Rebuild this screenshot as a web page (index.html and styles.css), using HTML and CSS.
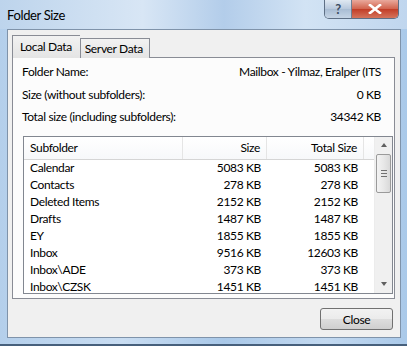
FILE: index.html
```html
<!DOCTYPE html>
<html lang="en">
<head>
    <meta charset="UTF-8">
    <title>Folder Size</title>
    <link rel="stylesheet" href="styles.css">
</head>
<body>

<div class="window">
    <div class="titlebar">
        <span class="title">Folder Size</span>
        <div class="caption-buttons">
            <div class="cap-btn help">?</div>
            <div class="cap-btn close">
                <svg width="14" height="10" viewBox="0 0 14 10">
                    <path d="M2 1 L12 9 M12 1 L2 9" stroke="#ffffff" stroke-width="2.6" stroke-linecap="square"/>
                </svg>
            </div>
        </div>
    </div>

    <div class="client">
        <div class="tabs">
            <div class="tab active">Local Data</div>
            <div class="tab">Server Data</div>
        </div>

        <div class="panel">
            <div class="info-row">
                <span>Folder Name:</span>
                <span>Mailbox - Yilmaz, Eralper (ITS</span>
            </div>
            <div class="info-row">
                <span>Size (without subfolders):</span>
                <span>0 KB</span>
            </div>
            <div class="info-row">
                <span>Total size (including subfolders):</span>
                <span>34342 KB</span>
            </div>

            <div class="list">
                <div class="list-body">
                    <div class="row header">
                        <div class="cell">Subfolder</div>
                        <div class="cell num">Size</div>
                        <div class="cell num">Total Size</div>
                    </div>
                    <div class="row"><div class="cell">Calendar</div><div class="cell num">5083 KB</div><div class="cell num">5083 KB</div></div>
                    <div class="row"><div class="cell">Contacts</div><div class="cell num">278 KB</div><div class="cell num">278 KB</div></div>
                    <div class="row"><div class="cell">Deleted Items</div><div class="cell num">2152 KB</div><div class="cell num">2152 KB</div></div>
                    <div class="row"><div class="cell">Drafts</div><div class="cell num">1487 KB</div><div class="cell num">1487 KB</div></div>
                    <div class="row"><div class="cell">EY</div><div class="cell num">1855 KB</div><div class="cell num">1855 KB</div></div>
                    <div class="row"><div class="cell">Inbox</div><div class="cell num">9516 KB</div><div class="cell num">12603 KB</div></div>
                    <div class="row"><div class="cell">Inbox\ADE</div><div class="cell num">373 KB</div><div class="cell num">373 KB</div></div>
                    <div class="row"><div class="cell">Inbox\CZSK</div><div class="cell num">1451 KB</div><div class="cell num">1451 KB</div></div>
                </div>
                <div class="scrollbar">
                    <div class="arrow up"></div>
                    <div class="thumb"><span class="grip"></span></div>
                    <div class="track"></div>
                    <div class="arrow down"></div>
                </div>
            </div>
        </div>

        <div class="footer">
            <button class="btn">Close</button>
        </div>
    </div>
</div>

</body>
</html>
```

FILE: styles.css
```css
body {
    margin: 0;
    font-family: Lato, "Noto Sans", sans-serif;
    font-size: 12px;
    letter-spacing: -0.35px;
    color: #000000;
    background-color: #a9c8e8;
}

.window {
    width: 407px;
    height: 346px;
    box-sizing: border-box;
    display: flex;
    flex-direction: column;
    background: linear-gradient(to right, #b4cfeb, #c9ddf2 30%, #a9c8e8 55%, #c3d9f0 80%, #aac9e9);
    border-bottom: 2px solid #47607c;
}

.titlebar {
    height: 29px;
    display: flex;
    align-items: flex-start;
    justify-content: space-between;
    background: linear-gradient(to right, #bdd4ec, #d8e6f5 35%, #b3cdea 55%, #d2e3f4 75%, #c0d6ee);
}

.title {
    padding: 7px 0 0 7px;
    font-size: 13px;
    color: #000000;
}

.caption-buttons {
    display: flex;
    margin-right: 8px;
    border: 1px solid #5e6f85;
    border-top: none;
    border-radius: 0 0 5px 5px;
    overflow: hidden;
    height: 18px;
}

.cap-btn {
    display: flex;
    align-items: center;
    justify-content: center;
    height: 18px;
}

.help {
    width: 26px;
    background: linear-gradient(#dfe8f2, #b7c8dc 50%, #a8bcd3 51%, #c5d4e5);
    border-right: 1px solid #6f7f93;
    color: #3c4d63;
    font-size: 13px;
    font-weight: bold;
}

.close {
    width: 46px;
    background: linear-gradient(#e9a99c, #d2654f 48%, #c23e28 52%, #d5745c);
}

.client {
    flex: 1;
    margin: 0 6px 6px 7px;
    border: 1px solid #7f93aa;
    background-color: #f0f0f0;
    display: flex;
    flex-direction: column;
    padding: 6px 5px 0 4px;
}

.tabs {
    display: flex;
    align-items: flex-end;
    height: 22px;
    position: relative;
    z-index: 1;
    margin-bottom: -1px;
}

.tab {
    height: 19px;
    padding: 0 6px 0 4px;
    border: 1px solid #898c95;
    border-bottom: none;
    background: linear-gradient(#f2f2f2, #e4e4e4);
    line-height: 19px;
}

.tab.active {
    height: 22px;
    line-height: 21px;
    background-color: #ffffff;
    border-right: none;
    padding: 0 8px 0 7px;
}

.panel {
    height: 242px;
    box-sizing: border-box;
    border: 1px solid #898c95;
    background-color: #fcfcfc;
    padding: 3px 13px 0 9px;
}

.info-row {
    display: flex;
    justify-content: space-between;
    height: 22.5px;
    line-height: 22px;
}

.list {
    display: flex;
    margin: 7px -12px 0 1px;
    height: 158px;
    box-sizing: border-box;
    border: 1px solid #828790;
    background-color: #ffffff;
    overflow: hidden;
}

.list-body {
    flex: 1;
    overflow: hidden;
}

.row {
    display: grid;
    grid-template-columns: 159px 84px 97px;
    height: 17.15px;
    line-height: 16px;
}

.row.header {
    height: 22px;
    line-height: 22px;
    border-bottom: 1px solid #d5d5d5;
    background: linear-gradient(#ffffff, #f7f8fa);
}

.row.header .cell {
    border-right: 1px solid #e5e5e5;
}

.cell {
    padding: 0 6px;
    white-space: nowrap;
}

.num {
    text-align: right;
}

.scrollbar {
    width: 17px;
    display: flex;
    flex-direction: column;
    background-color: #f0f0f0;
    border-left: 1px solid #ececec;
}

.arrow {
    height: 17px;
    display: flex;
    align-items: center;
    justify-content: center;
}

.arrow::after {
    content: "";
    border-left: 3px solid transparent;
    border-right: 3px solid transparent;
}

.arrow.up::after {
    border-bottom: 4px solid #606060;
}

.arrow.down::after {
    border-top: 4px solid #606060;
}

.thumb {
    height: 37px;
    margin: 0 1px;
    border: 1px solid #9a9a9a;
    border-radius: 2px;
    background: linear-gradient(to right, #f3f3f3, #e8e8e8 50%, #d9d9d9);
    display: flex;
    align-items: center;
    justify-content: center;
}

.grip {
    width: 6px;
    height: 5px;
    border-top: 1px solid #707070;
    border-bottom: 1px solid #707070;
    position: relative;
}

.grip::after {
    content: "";
    position: absolute;
    left: 0;
    right: 0;
    top: 2px;
    border-top: 1px solid #707070;
}

.track {
    flex: 1;
}

.footer {
    display: flex;
    justify-content: flex-end;
    padding: 9px 2px 0 0;
}

.btn {
    width: 73px;
    height: 22px;
    font-family: inherit;
    font-size: 12px;
    letter-spacing: -0.35px;
    color: #000000;
    border: 1px solid #707070;
    border-radius: 3px;
    background: linear-gradient(#f2f2f2, #ebebeb 50%, #dddddd 51%, #cfcfcf);
    padding: 0;
}
```
